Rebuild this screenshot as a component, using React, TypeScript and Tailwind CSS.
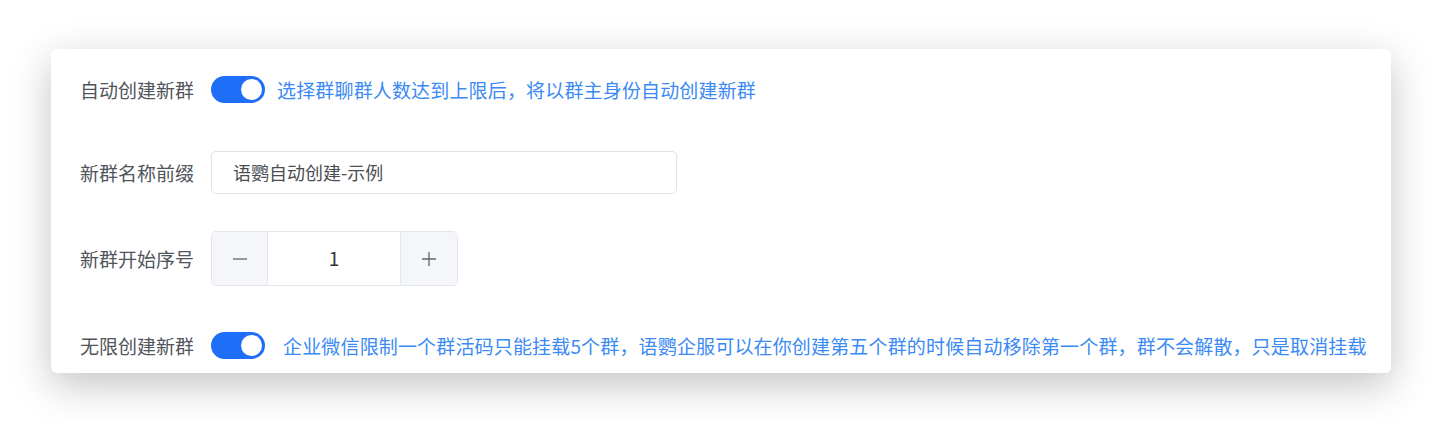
import React from "react";

const font = { fontFamily: '"Noto Sans CJK SC", "Noto Sans", sans-serif' };

function Toggle() {
  return (
    <div className="relative w-[54px] h-[27px] rounded-full bg-[#1f6ef7] shrink-0">
      <div className="absolute right-[3px] top-[3px] w-[21px] h-[21px] rounded-full bg-white" />
    </div>
  );
}

export default function App() {
  return (
    <div className="w-[1440px] h-[422px] bg-white pt-[49px] pl-[51px]" style={font}>
      <div className="w-[1340px] h-[324px] bg-white rounded-[6px] shadow-[0_12px_40px_rgba(0,0,0,0.24)] pl-[29px] pt-[27px] flex flex-col">
        <div className="flex items-center h-[26px]">
          <div className="w-[131px] text-[19px] leading-none text-[#50555c]">自动创建新群</div>
          <Toggle />
          <div className="ml-[12px] text-[19px] tracking-[0.16px] leading-none text-[#3b8af4] whitespace-nowrap">
            选择群聊群人数达到上限后，将以群主身份自动创建新群
          </div>
        </div>

        <div className="flex items-center h-[43px] mt-[49px]">
          <div className="w-[131px] text-[19px] leading-none text-[#50555c]">新群名称前缀</div>
          <div className="w-[466px] h-[43px] border border-[#dfe2e8] rounded-[5px] flex items-center pl-[21px] text-[18px] text-[#4a4d52]">
            语鹦自动创建-示例
          </div>
        </div>

        <div className="flex items-center h-[55px] mt-[37px]">
          <div className="w-[131px] text-[19px] leading-none text-[#50555c]">新群开始序号</div>
          <div className="w-[247px] h-[55px] border border-[#e3e6ec] rounded-[5px] flex overflow-hidden">
            <div className="w-[56px] h-full bg-[#f4f6fa] border-r border-[#e3e6ec] flex items-center justify-center">
              <svg width="16" height="16" viewBox="0 0 16 16">
                <path d="M1 8h14" stroke="#62656b" strokeWidth="1.3" />
              </svg>
            </div>
            <div className="flex-1 flex items-center justify-center text-[19px] text-[#333]">1</div>
            <div className="w-[57px] h-full bg-[#f4f6fa] border-l border-[#e3e6ec] flex items-center justify-center">
              <svg width="16" height="16" viewBox="0 0 16 16">
                <path d="M1 8h14M8 1v14" stroke="#62656b" strokeWidth="1.3" />
              </svg>
            </div>
          </div>
        </div>

        <div className="flex items-center h-[26px] mt-[46px]">
          <div className="w-[131px] text-[19px] leading-none text-[#50555c]">无限创建新群</div>
          <Toggle />
          <div className="ml-[18px] text-[19px] tracking-[0.16px] leading-none text-[#3b8af4] whitespace-nowrap">
            企业微信限制一个群活码只能挂载5个群，语鹦企服可以在你创建第五个群的时候自动移除第一个群，群不会解散，只是取消挂载
          </div>
        </div>
      </div>
    </div>
  );
}
